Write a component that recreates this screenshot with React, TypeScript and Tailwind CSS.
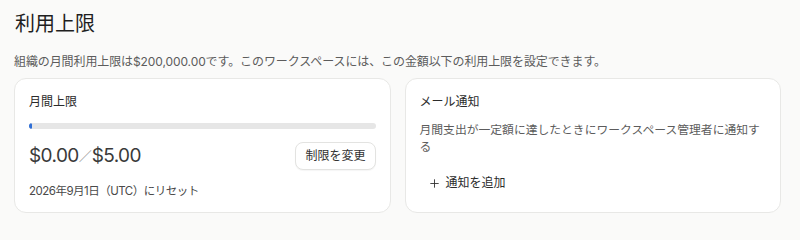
import React from 'react';
import { Plus } from 'lucide-react';

const font = { fontFamily: 'Inter, "Noto Sans CJK JP", "Noto Sans", sans-serif' };

const App: React.FC = () => {
  const spent = 0;
  const limit = 5;
  const pct = Math.max(0.8, (spent / limit) * 100);

  return (
    <div className="w-[800px] h-[240px] bg-[#fafaf9] pl-[14px] pr-[19px] pt-[9px]" style={font}>
      <h1 className="text-[20px] leading-[30px] text-[#1f1f1f] pl-px">利用上限</h1>
      <p className="mt-[15px] text-[12px] leading-[16px] text-[#5c5c5c] tracking-[-0.1px]">
        組織の月間利用上限は$200,000.00です。このワークスペースには、この金額以下の利用上限を設定できます。
      </p>

      <div className="mt-[8px] grid grid-cols-2 gap-[14px]">
        {/* Monthly limit */}
        <div className="h-[135px] bg-white border border-[#e8e8e6] rounded-[12px] px-[14px] pt-[14px]">
          <div className="text-[12px] leading-[18px] text-[#2b2b2b]">月間上限</div>
          <div className="mt-[12px] h-[6px] w-full rounded-full bg-[#e6e6e6] overflow-hidden">
            <div className="h-full rounded-full bg-[#2f6fd6]" style={{ width: `${pct}%` }} />
          </div>
          <div className="mt-[13px] flex items-center justify-between">
            <div className="text-[19px] leading-[28px] text-[#3a3a3a] tracking-[-0.6px] flex items-center">
              <span>$0.00</span>
              <span className="text-[#9a9a9a] text-[13px] tracking-normal">／</span>
              <span>$5.00</span>
            </div>
            <button className="h-[28px] px-[9px] rounded-[8px] border border-[#e3e3e1] bg-white text-[12px] text-[#333] shadow-[0_1px_1px_rgba(0,0,0,0.04)]">
              制限を変更
            </button>
          </div>
          <div className="mt-[13px] text-[11.5px] leading-[16px] text-[#4a4a4a] tracking-[-0.5px]">
            2026年9月1日（UTC）にリセット
          </div>
        </div>

        {/* Email notifications */}
        <div className="h-[135px] bg-white border border-[#e8e8e6] rounded-[12px] pl-[14px] pr-[10px] pt-[14px]">
          <div className="text-[12px] leading-[18px] text-[#2b2b2b]">メール通知</div>
          <p className="mt-[11px] text-[11.8px] leading-[17px] text-[#5c5c5c]">
            月間支出が一定額に達したときにワークスペース管理者に通知する
          </p>
          <button className="mt-[18px] ml-[8px] flex items-center gap-[5px] text-[12px] text-[#2b2b2b]">
            <Plus className="w-[13px] h-[13px]" strokeWidth={1.6} />
            通知を追加
          </button>
        </div>
      </div>
    </div>
  );
};

export default App;
